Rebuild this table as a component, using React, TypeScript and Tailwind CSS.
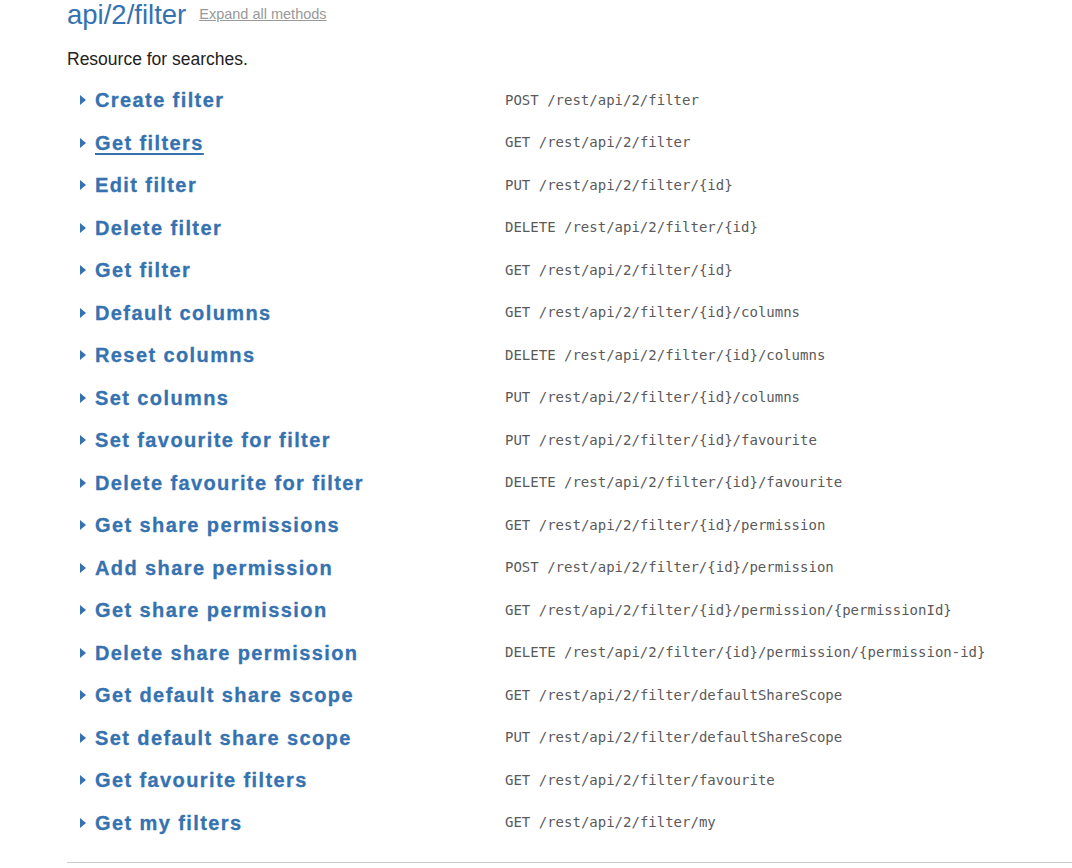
import { useState } from "react";

// Jira REST docs style resource listing: one collapsed row per method.
const METHODS: { title: string; verb: string; path: string }[] = [
  { title: "Create filter", verb: "POST", path: "/rest/api/2/filter" },
  { title: "Get filters", verb: "GET", path: "/rest/api/2/filter" },
  { title: "Edit filter", verb: "PUT", path: "/rest/api/2/filter/{id}" },
  { title: "Delete filter", verb: "DELETE", path: "/rest/api/2/filter/{id}" },
  { title: "Get filter", verb: "GET", path: "/rest/api/2/filter/{id}" },
  { title: "Default columns", verb: "GET", path: "/rest/api/2/filter/{id}/columns" },
  { title: "Reset columns", verb: "DELETE", path: "/rest/api/2/filter/{id}/columns" },
  { title: "Set columns", verb: "PUT", path: "/rest/api/2/filter/{id}/columns" },
  { title: "Set favourite for filter", verb: "PUT", path: "/rest/api/2/filter/{id}/favourite" },
  { title: "Delete favourite for filter", verb: "DELETE", path: "/rest/api/2/filter/{id}/favourite" },
  { title: "Get share permissions", verb: "GET", path: "/rest/api/2/filter/{id}/permission" },
  { title: "Add share permission", verb: "POST", path: "/rest/api/2/filter/{id}/permission" },
  { title: "Get share permission", verb: "GET", path: "/rest/api/2/filter/{id}/permission/{permissionId}" },
  { title: "Delete share permission", verb: "DELETE", path: "/rest/api/2/filter/{id}/permission/{permission-id}" },
  { title: "Get default share scope", verb: "GET", path: "/rest/api/2/filter/defaultShareScope" },
  { title: "Set default share scope", verb: "PUT", path: "/rest/api/2/filter/defaultShareScope" },
  { title: "Get favourite filters", verb: "GET", path: "/rest/api/2/filter/favourite" },
  { title: "Get my filters", verb: "GET", path: "/rest/api/2/filter/my" },
];

export default function App() {
  const [hovered] = useState("Get filters");
  return (
    <div className="min-h-[868px] bg-white font-['Liberation_Sans',Arial,sans-serif]">
      <div className="pl-[67px] pt-[1px]">
        <div className="flex h-[28px] items-center gap-[13px]">
          <h2 className="text-[27.5px] leading-[28px] text-[#3572b0]">api/2/filter</h2>
          <a href="#" className="text-[14.5px] text-[#999] underline">
            Expand all methods
          </a>
        </div>
        <p className="mt-[20px] text-[17.5px] leading-[20px] text-[#222]">Resource for searches.</p>

        <ul className="mt-[10px]">
          {METHODS.map((m) => (
            <li key={m.title} className="flex h-[42.5px] items-center">
              <div className="flex w-[438px] items-center pl-[13px]">
                <svg width="6" height="10" viewBox="0 0 6 10" className="mr-[9px] shrink-0">
                  <path d="M0 0 L6 5 L0 10 Z" fill="#3572b0" />
                </svg>
                <span
                  className={`text-[20px] font-bold tracking-[1.4px] text-[#3572b0] [-webkit-text-stroke:0.3px_#3572b0] ${
                    m.title === hovered ? "underline underline-offset-[3px]" : ""
                  }`}
                >
                  {m.title}
                </span>
              </div>
              <div className="font-['DejaVu_Sans_Mono',monospace] text-[14px] text-[#5a5a5a]">
                {m.verb} {m.path}
              </div>
            </li>
          ))}
        </ul>

        <hr className="mt-[18px] border-t border-[#ccc]" />
      </div>
    </div>
  );
}
